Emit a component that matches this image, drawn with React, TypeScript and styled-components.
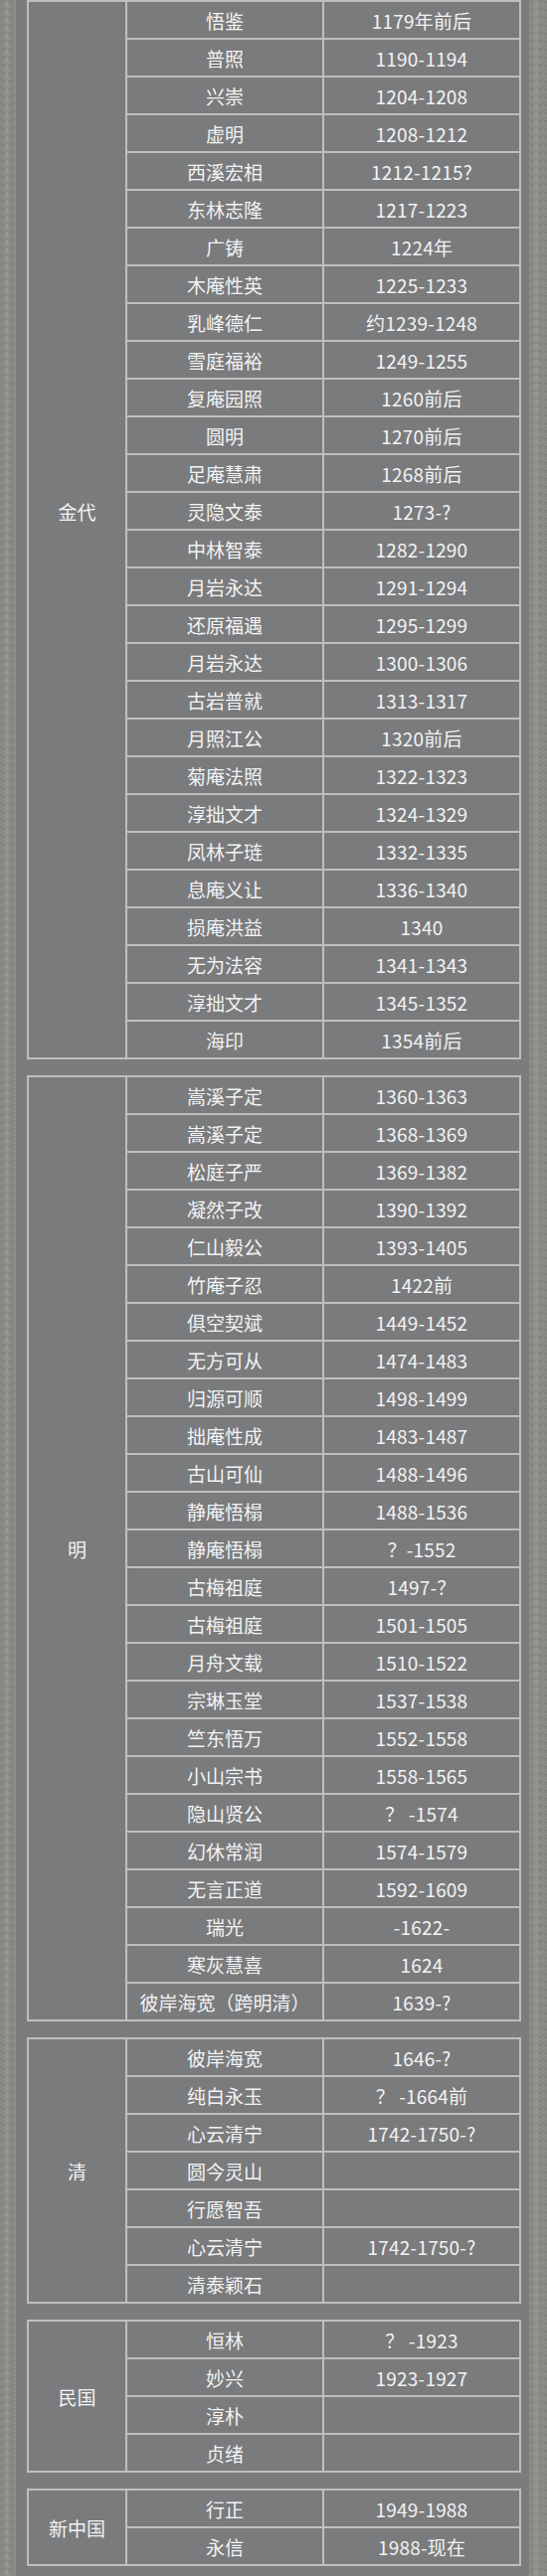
import React from 'react';
import styled, { createGlobalStyle } from 'styled-components';

interface Abbot {
    name: string;
    years?: string;
}

interface Era {
    title: string;
    abbots: Abbot[];
    continued?: boolean;
}

const eras: Era[] = [
    {
        title: '金代',
        continued: true,
        abbots: [
            { name: '悟鉴', years: '1179年前后' },
            { name: '普照', years: '1190-1194' },
            { name: '兴崇', years: '1204-1208' },
            { name: '虚明', years: '1208-1212' },
            { name: '西溪宏相', years: '1212-1215?' },
            { name: '东林志隆', years: '1217-1223' },
            { name: '广铸', years: '1224年' },
            { name: '木庵性英', years: '1225-1233' },
            { name: '乳峰德仁', years: '约1239-1248' },
            { name: '雪庭福裕', years: '1249-1255' },
            { name: '复庵园照', years: '1260前后' },
            { name: '圆明', years: '1270前后' },
            { name: '足庵慧肃', years: '1268前后' },
            { name: '灵隐文泰', years: '1273-?' },
            { name: '中林智泰', years: '1282-1290' },
            { name: '月岩永达', years: '1291-1294' },
            { name: '还原福遇', years: '1295-1299' },
            { name: '月岩永达', years: '1300-1306' },
            { name: '古岩普就', years: '1313-1317' },
            { name: '月照江公', years: '1320前后' },
            { name: '菊庵法照', years: '1322-1323' },
            { name: '淳拙文才', years: '1324-1329' },
            { name: '凤林子琏', years: '1332-1335' },
            { name: '息庵义让', years: '1336-1340' },
            { name: '损庵洪益', years: '1340' },
            { name: '无为法容', years: '1341-1343' },
            { name: '淳拙文才', years: '1345-1352' },
            { name: '海印', years: '1354前后' },
        ],
    },
    {
        title: '明',
        abbots: [
            { name: '嵩溪子定', years: '1360-1363' },
            { name: '嵩溪子定', years: '1368-1369' },
            { name: '松庭子严', years: '1369-1382' },
            { name: '凝然子改', years: '1390-1392' },
            { name: '仁山毅公', years: '1393-1405' },
            { name: '竹庵子忍', years: '1422前' },
            { name: '俱空契斌', years: '1449-1452' },
            { name: '无方可从', years: '1474-1483' },
            { name: '归源可顺', years: '1498-1499' },
            { name: '拙庵性成', years: '1483-1487' },
            { name: '古山可仙', years: '1488-1496' },
            { name: '静庵悟榻', years: '1488-1536' },
            { name: '静庵悟榻', years: '？-1552' },
            { name: '古梅祖庭', years: '1497-？' },
            { name: '古梅祖庭', years: '1501-1505' },
            { name: '月舟文载', years: '1510-1522' },
            { name: '宗琳玉堂', years: '1537-1538' },
            { name: '竺东悟万', years: '1552-1558' },
            { name: '小山宗书', years: '1558-1565' },
            { name: '隐山贤公', years: '？ -1574' },
            { name: '幻休常润', years: '1574-1579' },
            { name: '无言正道', years: '1592-1609' },
            { name: '瑞光', years: '-1622-' },
            { name: '寒灰慧喜', years: '1624' },
            { name: '彼岸海宽（跨明清）', years: '1639-?' },
        ],
    },
    {
        title: '清',
        abbots: [
            { name: '彼岸海宽', years: '1646-?' },
            { name: '纯白永玉', years: '？ -1664前' },
            { name: '心云清宁', years: '1742-1750-?' },
            { name: '圆今灵山' },
            { name: '行愿智吾' },
            { name: '心云清宁', years: '1742-1750-?' },
            { name: '清泰颖石' },
        ],
    },
    {
        title: '民国',
        abbots: [
            { name: '恒林', years: '？ -1923' },
            { name: '妙兴', years: '1923-1927' },
            { name: '淳朴' },
            { name: '贞绪' },
        ],
    },
    {
        title: '新中国',
        abbots: [
            { name: '行正', years: '1949-1988' },
            { name: '永信', years: '1988-现在' },
        ],
    },
];

const GlobalStyle = createGlobalStyle`
html, body {
    margin: 0;
    padding: 0;
}
body {
    font-family: "Noto Sans CJK SC", "Noto Sans", sans-serif;
    background-color: #8a8c88;
    background-image:
        radial-gradient(circle at 50% 100%, transparent 0, transparent 22%, rgba(255,255,255,0.08) 23%, rgba(255,255,255,0.08) 30%, transparent 31%, transparent 44%, rgba(255,255,255,0.08) 45%, rgba(255,255,255,0.08) 52%, transparent 53%, transparent 66%, rgba(0,0,0,0.05) 67%, rgba(0,0,0,0.05) 74%, transparent 75%),
        radial-gradient(circle at 0 50%, transparent 0, transparent 22%, rgba(0,0,0,0.05) 23%, rgba(0,0,0,0.05) 30%, transparent 31%, transparent 44%, rgba(255,255,255,0.06) 45%, rgba(255,255,255,0.06) 52%, transparent 53%),
        radial-gradient(circle at 100% 50%, transparent 0, transparent 22%, rgba(0,0,0,0.05) 23%, rgba(0,0,0,0.05) 30%, transparent 31%, transparent 44%, rgba(255,255,255,0.06) 45%, rgba(255,255,255,0.06) 52%, transparent 53%);
    background-size: 14px 8px;
}
`;

const Page = styled.div`
padding: 0 17px 4px 15px;
`;

const Panel = styled.div`
background: #7b7c7e;
border-left: 1px solid #8f9091;
border-right: 1px solid #8f9091;
border-bottom: 1px solid #8f9091;
border-radius: 0 0 6px 6px;
padding: 0 10px 12px 11px;
display: flex;
flex-direction: column;
gap: 16px;
`;

const Table = styled.table`
width: 100%;
border-collapse: collapse;
table-layout: fixed;
border: 2px solid #bfbfc0;
background: #7a7b7d;
color: #f3f3f3;
font-size: 19px;
line-height: 1;

td {
    border: 2px solid #bfbfc0;
    height: 36px;
    padding: 0;
    text-align: center;
    vertical-align: middle;
    white-space: nowrap;
}
`;

const EraCol = styled.col`
width: 99px;
`;

const TextCol = styled.col`
width: 198px;
`;

const EraCell = styled.td``;

const EraLabel = styled.span<{ $continued?: boolean }>`
display: inline-block;
${p => p.$continued ? 'transform: translateY(-19px);' : ''}
`;

const YearsCell = styled.td`
letter-spacing: 0.2px;
`;

export default function App() {
    return (
        <>
            <GlobalStyle />
            <Page>
                <Panel>
                    {eras.map(era => (
                        <Table key={era.title}>
                            <colgroup>
                                <EraCol />
                                <TextCol />
                                <TextCol />
                            </colgroup>
                            <tbody>
                                {era.abbots.map((abbot, i) => (
                                    <tr key={i}>
                                        {i === 0 && (
                                            <EraCell rowSpan={era.abbots.length}>
                                                <EraLabel $continued={era.continued}>{era.title}</EraLabel>
                                            </EraCell>
                                        )}
                                        <td>{abbot.name}</td>
                                        <YearsCell>{abbot.years || ''}</YearsCell>
                                    </tr>
                                ))}
                            </tbody>
                        </Table>
                    ))}
                </Panel>
            </Page>
        </>
    );
}
